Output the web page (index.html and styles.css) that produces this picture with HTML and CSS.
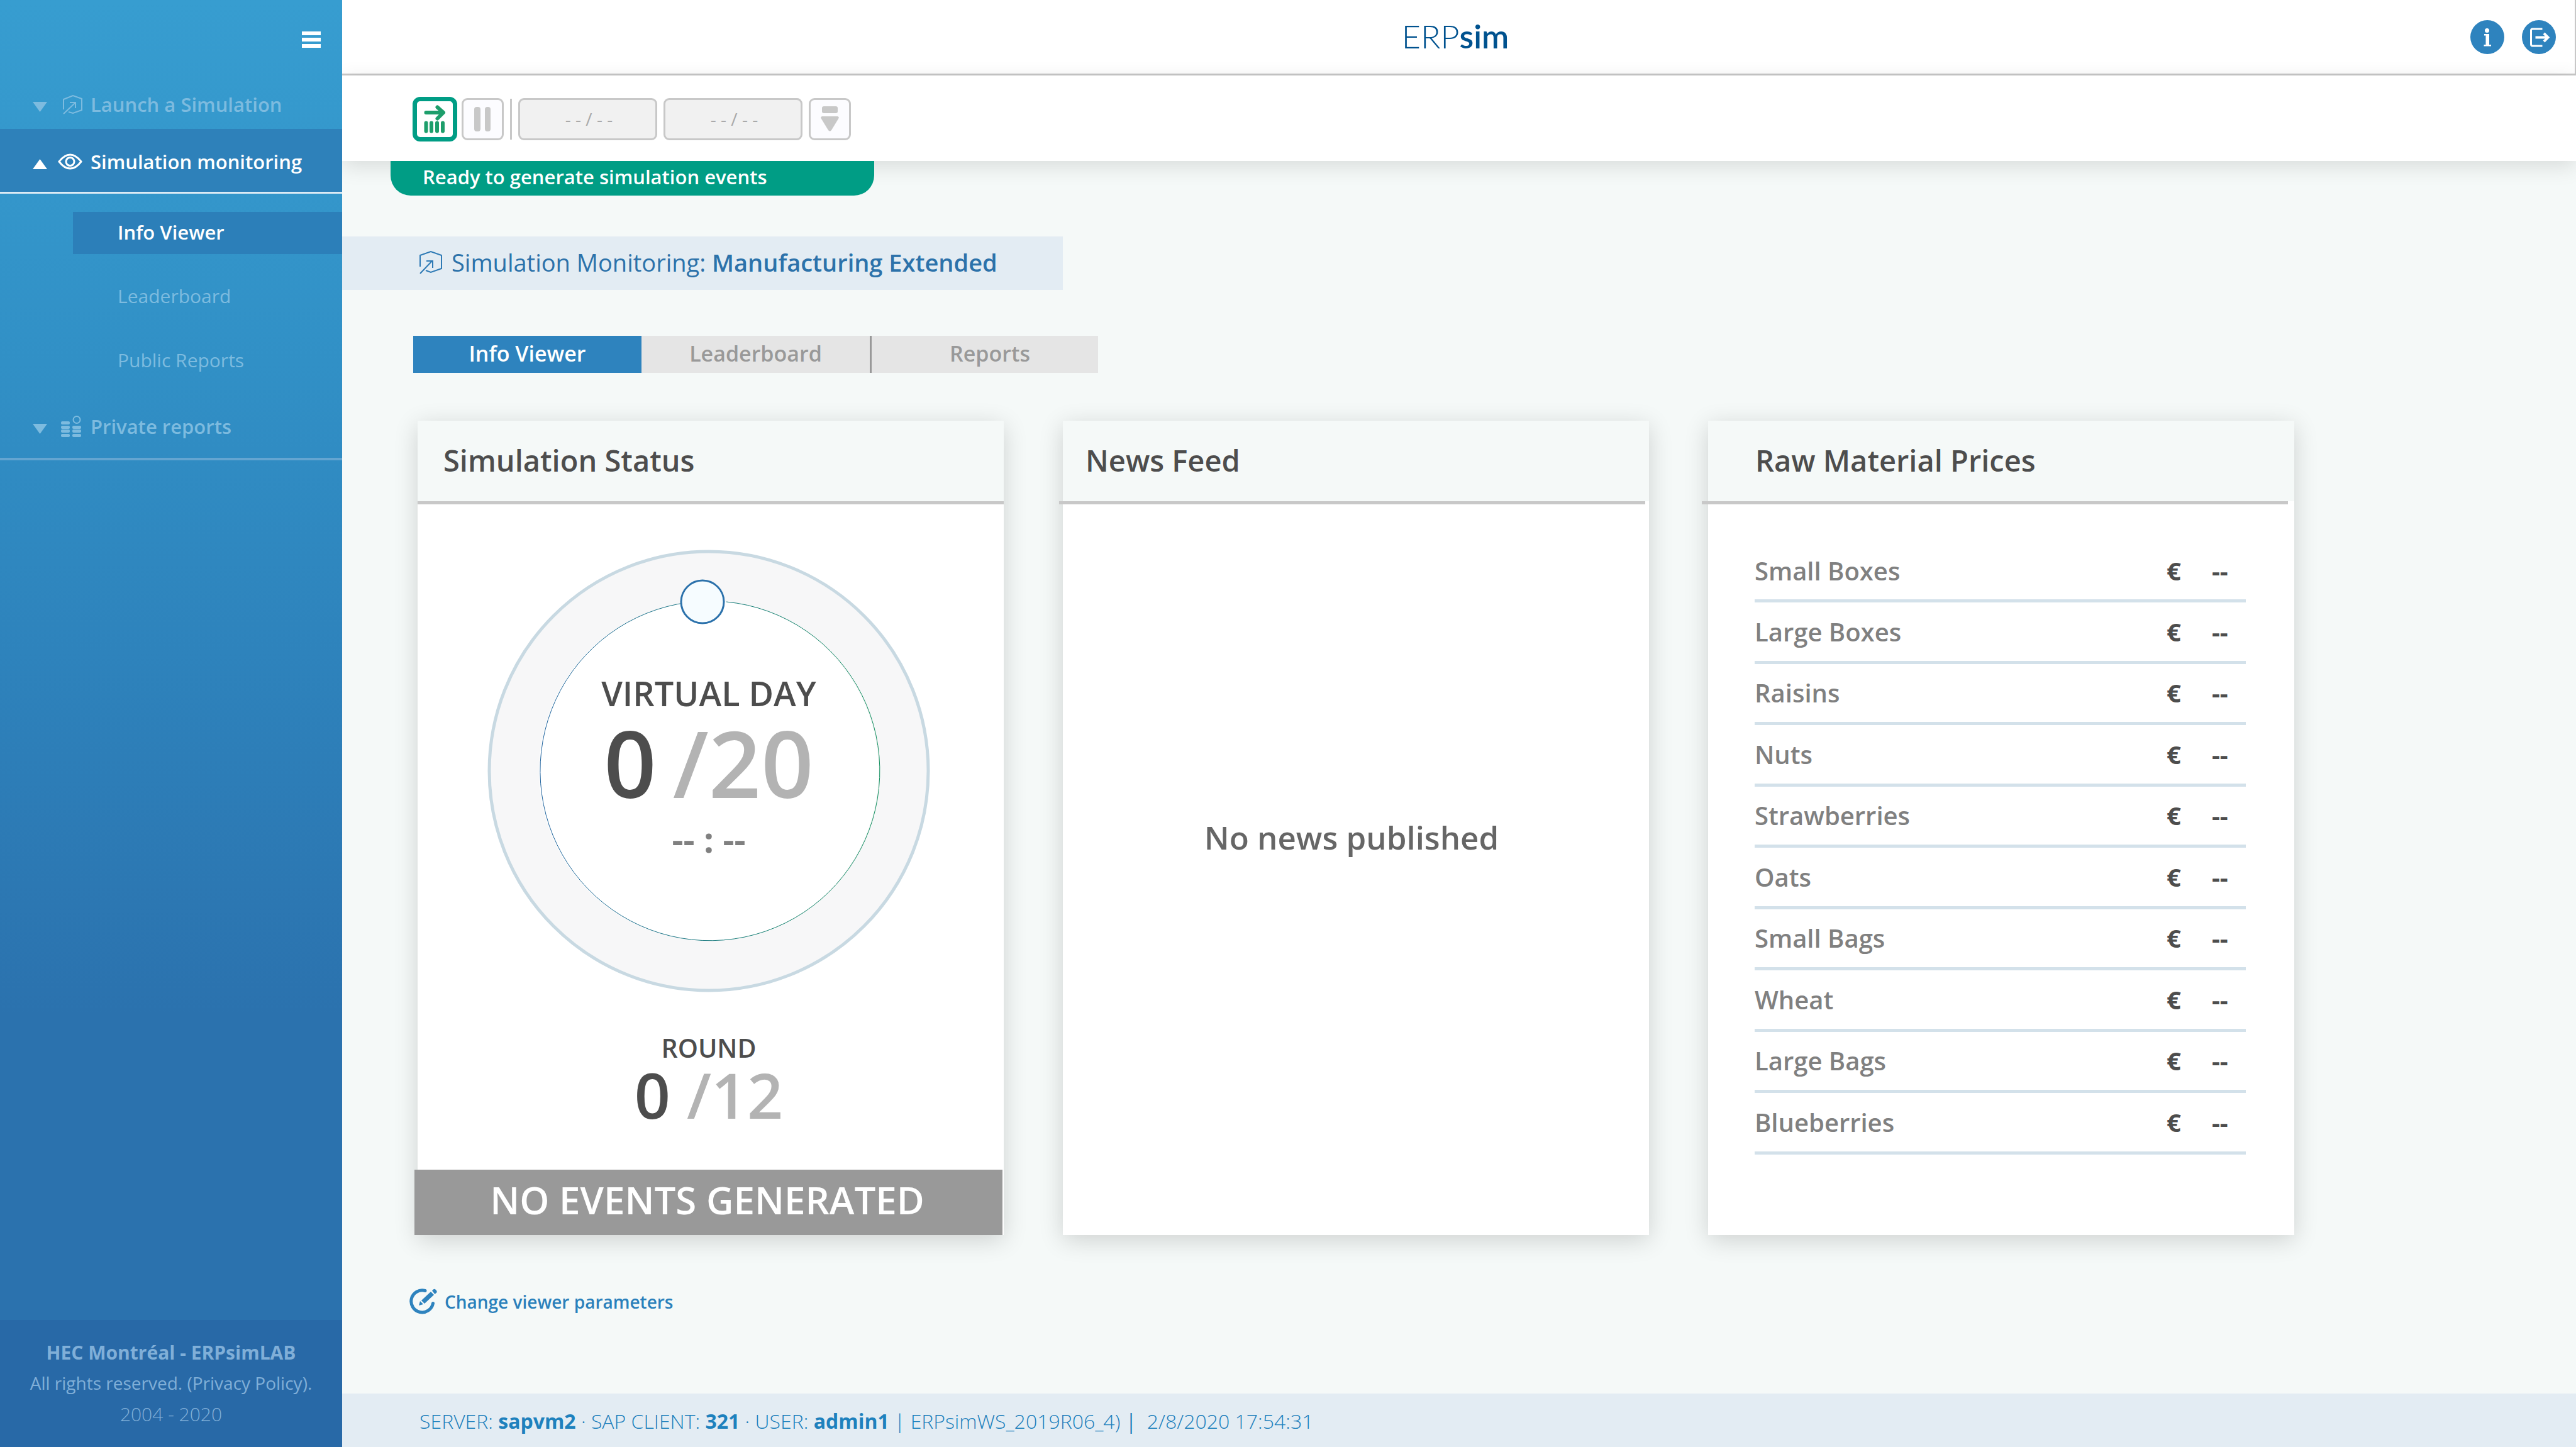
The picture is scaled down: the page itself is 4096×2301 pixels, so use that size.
FILE: index.html
```html
<!DOCTYPE html>
<html lang="en">
<head>
<meta charset="utf-8">
<meta name="viewport" content="width=device-width, initial-scale=1">
<title>ERPsim - Simulation Monitoring</title>
<link rel="stylesheet" href="styles.css">
</head>
<body>
<div class="app">
  <aside class="sidebar">
    <div class="sidebar-top">
      <button class="menu-button" type="button" aria-label="Toggle menu">
        <svg width="30" height="26" viewBox="0 0 30 26" fill="currentColor"><path d="M0 0h30v6H0zM0 10h30v6H0zM0 20h30v6H0z"/></svg>
      </button>
    </div>
    <nav class="nav">
      <button class="nav-row" type="button">
        <svg class="caret" width="23" height="16" viewBox="0 0 23 16" fill="currentColor"><path d="M0 0h23L11.500 16z"/></svg>
        <svg class="nav-icon" width="39" height="32" viewBox="0 0 39 32" fill="none" stroke="currentColor" stroke-width="2"><path d="M9 24V8l15-6 14 5v18l-14 5-7-2M9 31l19-18M19 13h9v9"/></svg>
        <span>Launch a Simulation</span>
      </button>
      <button class="nav-row nav-row-active" type="button">
        <svg class="caret" width="23" height="16" viewBox="0 0 23 16" fill="currentColor"><path d="M0 16h23L11.500 0z"/></svg>
        <svg class="nav-icon" width="39" height="26" viewBox="0 0 39 26" fill="none" stroke="currentColor" stroke-width="3"><path d="M2 13C8 5 14 2 19.500 2S31 5 37 13C31 21 25 24 19.500 24S8 21 2 13z"/><circle cx="19.500" cy="13" r="6.500"/></svg>
        <span>Simulation monitoring</span>
      </button>
      <div class="subnav">
        <a class="subnav-link subnav-link-active" href="#info">Info Viewer</a>
        <a class="subnav-link" href="#leaderboard">Leaderboard</a>
        <a class="subnav-link" href="#reports">Public Reports</a>
      </div>
      <button class="nav-row nav-row-last" type="button">
        <svg class="caret" width="23" height="16" viewBox="0 0 23 16" fill="currentColor"><path d="M0 0h23L11.500 16z"/></svg>
        <svg class="nav-icon" width="39" height="36" viewBox="0 0 39 36" fill="currentColor"><rect x="5" y="10" width="14" height="5" rx="2"/><rect x="5" y="17" width="14" height="5" rx="2"/><rect x="5" y="23" width="14" height="5" rx="2"/><rect x="5" y="30" width="14" height="5" rx="2"/><rect x="23" y="17" width="14" height="5" rx="2"/><rect x="23" y="23" width="14" height="5" rx="2"/><rect x="23" y="30" width="14" height="5" rx="2"/><circle cx="30" cy="7.500" r="5.500" fill="none" stroke="currentColor" stroke-width="2"/></svg>
        <span>Private reports</span>
      </button>
    </nav>
    <footer class="sidebar-footer">
      <strong>HEC Montréal - ERPsimLAB</strong>
      <span class="rights">All rights reserved. (<a href="#privacy">Privacy Policy</a>).</span>
      <span class="years">2004 - 2020</span>
    </footer>
  </aside>

  <div class="page">
    <header class="topbar">
      <h1 class="logo">ERP<b>sim</b></h1>
      <div class="topbar-actions">
        <button class="round-button" type="button" aria-label="Information">
          <svg width="54" height="54" viewBox="0 0 54 54"><circle cx="27" cy="27" r="27" fill="#2e83be"/><g fill="#fff"><circle cx="26.500" cy="16.500" r="3.500"/><path d="M22 22h8v17h3v2.500H21.500V39h3V24.500H22z"/></g></svg>
        </button>
        <button class="round-button" type="button" aria-label="Log out">
          <svg width="54" height="54" viewBox="0 0 54 54"><circle cx="27" cy="27" r="27" fill="#2e83be"/><path d="M32.500 14H17q-2.500 0-2.500 2.500v22q0 2.500 2.500 2.500h15.500" fill="none" stroke="#fff" stroke-width="3"/><path d="M21.500 27.500H40" fill="none" stroke="#fff" stroke-width="4"/><path d="M35 21l6.500 6.500L35 34" fill="none" stroke="#fff" stroke-width="4"/></svg>
        </button>
      </div>
    </header>

    <div class="toolbar">
      <button class="tool tool-run" type="button" aria-label="Generate events">
        <svg width="57" height="57" viewBox="0 0 57 57" fill="none" stroke="#1d9e6b" stroke-width="6" stroke-linecap="round" stroke-linejoin="round"><path d="M14.500 18H41M32.500 9.500L42 18l-9.500 9.500M14.500 34.500v13M23 34.500v13M32 34.500v13M41 34.500v13"/></svg>
      </button>
      <button class="tool" type="button" aria-label="Pause">
        <svg width="61" height="61" viewBox="0 0 61 61" fill="#c8c8c8"><rect x="17" y="11" width="10" height="39" rx="4"/><rect x="34" y="11" width="9" height="39" rx="4"/></svg>
      </button>
      <span class="tool-divider"></span>
      <input class="tool-field" type="text" aria-label="Round" value="- - / - -" readonly>
      <input class="tool-field" type="text" aria-label="Day" value="- - / - -" readonly>
      <button class="tool" type="button" aria-label="More">
        <svg width="61" height="61" viewBox="0 0 61 61" fill="#c8c8c8"><rect x="18" y="10" width="25" height="11" rx="3"/><path d="M18 26h25q3 1 1 4L33 48q-2.500 3-5 0L17 30q-2-3 1-4z"/></svg>
      </button>
    </div>

    <main class="content">
      <p class="banner" role="status">Ready to generate simulation events</p>

      <h2 class="page-title">
        <svg width="36" height="38" viewBox="0 0 36 38" fill="none" stroke="#2e7ab5" stroke-width="2"><path d="M1 26V8L18 2l17 6v21l-17 6-8-3M1 37l19-20M11 17h10v11"/></svg>
        <span>Simulation Monitoring: <b>Manufacturing Extended</b></span>
      </h2>

      <div class="tabs" role="tablist">
        <button class="tab tab-active" type="button" role="tab" aria-selected="true">Info Viewer</button>
        <button class="tab" type="button" role="tab" aria-selected="false">Leaderboard</button>
        <button class="tab tab-divided" type="button" role="tab" aria-selected="false">Reports</button>
      </div>

      <div class="cards">
        <section class="card">
          <h3 class="card-title">Simulation Status</h3>
          <div class="card-rule"></div>
          <div class="status">
            <div class="dial">
              <svg class="dial-art" width="704" height="704" viewBox="0 0 704 704">
                <defs>
                  <linearGradient id="ring" x1="0" y1="0" x2="1" y2="0"><stop offset="0" stop-color="#20639e"/><stop offset="1" stop-color="#0f8f5c"/></linearGradient>
                </defs>
                <circle cx="352" cy="352" r="349" fill="#f7f7f8" stroke="#c8d9e2" stroke-width="5"/>
                <circle cx="352" cy="352" r="270" fill="#fff"/>
                <path d="M380 83A270 270 0 1 1 319 84" fill="none" stroke="url(#ring)" stroke-width="1"/>
                <circle cx="342" cy="83" r="34" fill="#f6fcff" stroke="#2b71ab" stroke-width="3"/>
              </svg>
              <div class="dial-text">
                <div class="dial-label">VIRTUAL DAY</div>
                <div class="dial-value"><span>0</span><span class="total">/20</span></div>
                <div class="dial-clock">-- : --</div>
              </div>
            </div>
            <div class="round-label">ROUND</div>
            <div class="round-value"><span>0</span><span class="total">/12</span></div>
          </div>
          <div class="status-bar">NO EVENTS GENERATED</div>
        </section>

        <section class="card card-news">
          <h3 class="card-title">News Feed</h3>
          <div class="card-rule"></div>
          <p class="news-empty">No news published</p>
        </section>

        <section class="card card-prices">
          <h3 class="card-title">Raw Material Prices</h3>
          <div class="card-rule"></div>
          <table class="prices">
            <tbody>
              <tr><th scope="row">Small Boxes</th><td class="currency">€</td><td>--</td></tr>
              <tr><th scope="row">Large Boxes</th><td class="currency">€</td><td>--</td></tr>
              <tr><th scope="row">Raisins</th><td class="currency">€</td><td>--</td></tr>
              <tr><th scope="row">Nuts</th><td class="currency">€</td><td>--</td></tr>
              <tr><th scope="row">Strawberries</th><td class="currency">€</td><td>--</td></tr>
              <tr><th scope="row">Oats</th><td class="currency">€</td><td>--</td></tr>
              <tr><th scope="row">Small Bags</th><td class="currency">€</td><td>--</td></tr>
              <tr><th scope="row">Wheat</th><td class="currency">€</td><td>--</td></tr>
              <tr><th scope="row">Large Bags</th><td class="currency">€</td><td>--</td></tr>
              <tr><th scope="row">Blueberries</th><td class="currency">€</td><td>--</td></tr>
            </tbody>
          </table>
        </section>
      </div>

      <a class="edit-link" href="#parameters">
        <svg width="44" height="42" viewBox="0 0 44 42" fill="none" stroke="#2e83be"><path d="M25 3.500A17.500 17.500 0 1 0 37.500 23.500" stroke-width="5" stroke-linecap="round"/><g fill="#2e83be" stroke="none"><path d="M15 27l2-7 5 5z"/><path d="M19 19L34 5l5 5-15 14z"/><path d="M36 3.500l2-2q2-2 4.500 1t0 4.500l-2 2z"/></g></svg>
        <span>Change viewer parameters</span>
      </a>
    </main>

    <footer class="statusline">SERVER: <b>sapvm2</b> · SAP CLIENT: <b>321</b> · USER: <b>admin1</b> | ERPsimWS_2019R06_4) <span class="bar">|</span>&nbsp; 2/8/2020 17:54:31</footer>
  </div>
</div>
</body>
</html>
```
FILE: styles.css
```css
* {
  box-sizing: border-box;
}

body {
  margin: 0;
  font-family: "Open Sans", "Noto Sans", sans-serif;
  background: #f5f9f8;
  color: #4d4d4d;
}

h1, h2, h3, p {
  margin: 0;
  font-weight: 400;
}

button, input {
  font: inherit;
  color: inherit;
  margin: 0;
  padding: 0;
  border: 0;
  background: none;
}

a {
  color: inherit;
  text-decoration: none;
}

svg {
  display: block;
  flex: none;
}

.app {
  display: flex;
  min-height: 100vh;
}

/* Sidebar */
.sidebar {
  position: relative;
  z-index: 3;
  flex: none;
  width: 544px;
  display: flex;
  flex-direction: column;
  font-size: 30px;
  line-height: 40px;
  color: #7dbbdf;
  background: linear-gradient(#379dd0 0%, #3190c6 25%, #2e83bc 45%, #2b72ae 70%, #2b72ae 100%);
}

.sidebar-top {
  display: flex;
  justify-content: flex-end;
  height: 127px;
  padding: 50px 34px 0 0;
}

.menu-button {
  height: 26px;
  color: #fff;
}

.nav {
  flex: 1;
}

.nav-row {
  display: flex;
  align-items: center;
  width: 100%;
  height: 78px;
  padding-left: 52px;
  font-size: 31px;
  font-weight: 600;
  text-align: left;
}

.caret {
  margin: 8px 17px 0 0;
}

.nav-icon {
  margin-right: 13px;
}

.nav-row-active {
  height: 103px;
  padding-top: 4px;
  color: #fff;
  background: #2e81ba;
  border-bottom: 3px solid #dcebf5;
}

.nav-row-last {
  height: 104px;
  border-bottom: 4px solid #64a5d1;
}

.subnav {
  display: flex;
  flex-direction: column;
  gap: 35px;
  padding: 29px 0 20px 116px;
}

.subnav-link {
  height: 67px;
  padding-left: 71px;
  line-height: 64px;
}

.subnav-link-active {
  font-size: 31px;
  font-weight: 600;
  color: #fff;
  background: #2c7fb9;
}

.sidebar-footer {
  display: flex;
  flex-direction: column;
  height: 202px;
  padding-top: 27px;
  line-height: 49px;
  text-align: center;
  color: #80afd8;
  background: #2869a7;
}

.sidebar-footer strong {
  font-weight: 700;
}

.rights {
  font-size: 28px;
}

.years {
  font-weight: 300;
}

/* Page frame */
.page {
  flex: 1;
  min-width: 0;
  display: flex;
  flex-direction: column;
}

.topbar {
  display: grid;
  grid-template-columns: 1fr auto 1fr;
  align-items: center;
  height: 120px;
  padding: 0 30px 0 20px;
  background: #fff;
  border-bottom: 3px solid #c8c8c8;
  border-right: 2px solid #c8c8c8;
}

.logo {
  grid-column: 2;
  padding-bottom: 4px;
  font-family: Lato, "Open Sans", sans-serif;
  font-size: 52px;
  line-height: 60px;
  font-weight: 300;
  color: #00528f;
}

.logo b {
  font-weight: 600;
}

.topbar-actions {
  display: flex;
  justify-content: flex-end;
  gap: 28px;
}

.round-button {
  width: 54px;
  height: 54px;
}

.toolbar {
  position: relative;
  z-index: 1;
  display: flex;
  align-items: center;
  gap: 10px;
  height: 136px;
  padding: 2px 0 0 112px;
  background: #fff;
  box-shadow: 0 8px 32px rgba(0, 0, 0, 0.12);
}

.tool {
  flex: none;
  width: 67px;
  height: 67px;
  border: 3px solid #c8c8c8;
  border-radius: 9px;
  background: #fcfcff;
}

.tool-run {
  width: 71px;
  height: 71px;
  margin-right: -3px;
  border: 7px solid #009d85;
  border-radius: 12px;
  background: #fff;
}

.tool-divider {
  width: 3px;
  height: 65px;
  background: #c8c8c8;
}

.tool-field {
  width: 221px;
  height: 67px;
  padding-left: 4px;
  border: 3px solid #c8c8c8;
  border-radius: 9px;
  font-size: 28px;
  text-align: center;
  color: #aaa;
  background: #f1f1f1;
}

/* Main content */
.content {
  flex: 1;
  display: flex;
  flex-direction: column;
  align-items: flex-start;
}

.banner {
  position: relative;
  z-index: 2;
  width: 769px;
  height: 55px;
  margin-left: 77px;
  padding-left: 51px;
  border-radius: 0 0 32px 32px;
  font-size: 31px;
  line-height: 50px;
  font-weight: 600;
  color: #fff;
  background: #009d85;
}

.page-title {
  display: flex;
  align-items: center;
  gap: 15px;
  height: 85px;
  margin-top: 65px;
  padding: 0 104px 3px 123px;
  font-size: 38px;
  line-height: 48px;
  color: #2c72aa;
  background: #e3ecf3;
}

.page-title b {
  font-weight: 600;
}

.tabs {
  display: flex;
  margin: 73px 0 0 113px;
}

.tab {
  width: 363px;
  height: 59px;
  padding-bottom: 3px;
  font-size: 34px;
  line-height: 40px;
  font-weight: 600;
  color: #999;
  background: #e5e5e5;
}

.tab-active {
  color: #fff;
  background: #2e83be;
}

.tab-divided {
  padding-left: 16px;
  border-left: 3px solid #999;
}

.cards {
  align-self: stretch;
  display: grid;
  grid-template-columns: repeat(3, 1fr);
  gap: 94px;
  margin-top: 76px;
  padding: 0 448px 0 120px;
}

.card {
  display: flex;
  flex-direction: column;
  background: #fff;
  box-shadow: 0 8px 36px rgba(0, 0, 0, 0.16);
}

.card-title {
  height: 128px;
  padding-left: 41px;
  font-size: 47px;
  line-height: 126px;
  font-weight: 600;
  background: #f5f9f8;
}

.card-rule {
  height: 5px;
  background: #c8c8c8;
}

.card-news .card-title {
  padding-left: 36px;
}

.card-prices .card-title {
  padding-left: 75px;
}

.card-news .card-rule {
  margin: 0 6px 0 -6px;
}

.card-prices .card-rule {
  margin: 0 10px 0 -10px;
}

.status {
  display: flex;
  flex-direction: column;
  align-items: center;
  padding: 72px 6px 70px 0;
  font-weight: 600;
}

.dial {
  display: grid;
}

.dial-art,
.dial-text {
  grid-area: 1 / 1;
}

.dial-text {
  z-index: 1;
  padding-top: 196px;
  text-align: center;
}

.dial-label {
  font-size: 54px;
  line-height: 64px;
}

.dial-value,
.round-value {
  display: flex;
  justify-content: center;
}

.dial-value {
  gap: 26px;
  font-size: 146px;
  line-height: 158px;
}

.dial-clock {
  font-size: 56px;
  line-height: 84px;
  font-weight: 700;
  color: #808080;
}

.round-label {
  margin-top: 64px;
  font-size: 41px;
  line-height: 48px;
}

.round-value {
  gap: 26px;
  font-size: 100px;
  line-height: 100px;
}

.total {
  color: #b3b3b3;
}

.status-bar {
  margin: auto 2px 0 -5px;
  padding: 0 4px 8px 0;
  font-size: 60px;
  line-height: 96px;
  font-weight: 600;
  text-align: center;
  color: #fff;
  background: #999;
}

.news-empty {
  margin: auto;
  padding: 0 14px 104px 0;
  font-size: 51px;
  line-height: 64px;
  font-weight: 600;
  color: #666;
}

.prices {
  height: 973px;
  margin: 61px 77px 0 74px;
  border-collapse: collapse;
  font-size: 40px;
  line-height: 48px;
}

.prices th,
.prices td {
  padding: 0;
  border-bottom: 5px solid #d3e1ea;
}

.prices th {
  font-weight: 600;
  text-align: left;
  color: #808080;
}

.prices td {
  width: 54px;
  font-weight: 700;
}

.prices .currency {
  width: 72px;
}

.edit-link {
  display: flex;
  align-items: center;
  gap: 12px;
  margin: 82px 0 0 107px;
  font-size: 28px;
  line-height: 48px;
  font-weight: 600;
  color: #2a80bb;
}

.statusline {
  height: 85px;
  padding-left: 123px;
  font-size: 32px;
  line-height: 88px;
  font-weight: 300;
  color: #1e81bd;
  background: #e3ecf3;
}

.statusline b {
  font-weight: 700;
}

.statusline .bar {
  font-weight: 400;
}
```
